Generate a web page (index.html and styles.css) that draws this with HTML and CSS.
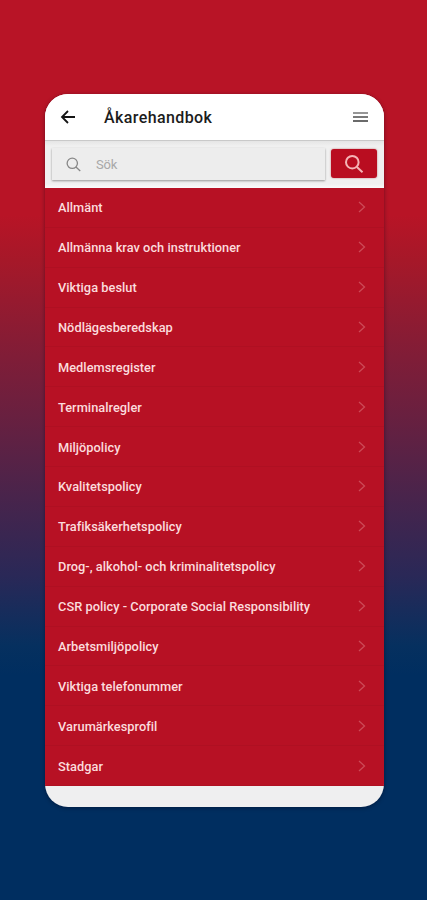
FILE: index.html
```html
<!DOCTYPE html>
<html lang="sv">
<head>
<meta charset="utf-8">
<title>Åkarehandbok</title>
<link rel="stylesheet" href="styles.css">
</head>
<body>
<main class="phone">
  <header class="topbar">
    <svg class="back" viewBox="0 0 16 16"><path d="M15 8H2M8 2L2 8l6 6"/></svg>
    <h1 class="title">Åkarehandbok</h1>
    <svg class="menu" viewBox="0 0 15 10"><path d="M0 1h15" opacity=".7"/><path d="M0 5h15" opacity=".9"/><path d="M0 9h15"/></svg>
  </header>
  <div class="searchbar">
    <div class="field">
      <svg class="glass" viewBox="0 0 16 16"><circle cx="6.7" cy="6.7" r="5.5"/><path d="M10.6 10.6l4.6 4.4"/></svg>
      <span class="placeholder">Sök</span>
    </div>
    <button class="go" aria-label="Sök"><svg class="go-icon" viewBox="0 0 20 20"><circle cx="8.3" cy="8.2" r="6.3"/><path d="M12.9 12.9l5.6 5.3"/></svg></button>
  </div>
  <ul class="list">
    <li class="row"><span class="label">Allmänt</span><svg class="chev" viewBox="0 0 8 12"><path d="M1 1l5.5 5L1 11"/></svg></li>
    <li class="row"><span class="label">Allmänna krav och instruktioner</span><svg class="chev" viewBox="0 0 8 12"><path d="M1 1l5.5 5L1 11"/></svg></li>
    <li class="row"><span class="label">Viktiga beslut</span><svg class="chev" viewBox="0 0 8 12"><path d="M1 1l5.5 5L1 11"/></svg></li>
    <li class="row"><span class="label">Nödlägesberedskap</span><svg class="chev" viewBox="0 0 8 12"><path d="M1 1l5.5 5L1 11"/></svg></li>
    <li class="row"><span class="label">Medlemsregister</span><svg class="chev" viewBox="0 0 8 12"><path d="M1 1l5.5 5L1 11"/></svg></li>
    <li class="row"><span class="label">Terminalregler</span><svg class="chev" viewBox="0 0 8 12"><path d="M1 1l5.5 5L1 11"/></svg></li>
    <li class="row"><span class="label">Miljöpolicy</span><svg class="chev" viewBox="0 0 8 12"><path d="M1 1l5.5 5L1 11"/></svg></li>
    <li class="row"><span class="label">Kvalitetspolicy</span><svg class="chev" viewBox="0 0 8 12"><path d="M1 1l5.5 5L1 11"/></svg></li>
    <li class="row"><span class="label">Trafiksäkerhetspolicy</span><svg class="chev" viewBox="0 0 8 12"><path d="M1 1l5.5 5L1 11"/></svg></li>
    <li class="row"><span class="label">Drog-, alkohol- och kriminalitetspolicy</span><svg class="chev" viewBox="0 0 8 12"><path d="M1 1l5.5 5L1 11"/></svg></li>
    <li class="row"><span class="label">CSR policy - Corporate Social Responsibility</span><svg class="chev" viewBox="0 0 8 12"><path d="M1 1l5.5 5L1 11"/></svg></li>
    <li class="row"><span class="label">Arbetsmiljöpolicy</span><svg class="chev" viewBox="0 0 8 12"><path d="M1 1l5.5 5L1 11"/></svg></li>
    <li class="row"><span class="label">Viktiga telefonummer</span><svg class="chev" viewBox="0 0 8 12"><path d="M1 1l5.5 5L1 11"/></svg></li>
    <li class="row"><span class="label">Varumärkesprofil</span><svg class="chev" viewBox="0 0 8 12"><path d="M1 1l5.5 5L1 11"/></svg></li>
    <li class="row"><span class="label">Stadgar</span><svg class="chev" viewBox="0 0 8 12"><path d="M1 1l5.5 5L1 11"/></svg></li>
  </ul>
</main>
</body>
</html>
```
FILE: styles.css
```css
* { box-sizing: border-box; }
body {
  margin: 0;
  height: 900px;
  padding: 94px 43px 93px 45px;
  overflow: hidden;
  font-family: Roboto, "Liberation Sans", sans-serif;
  background: linear-gradient(#b81426 0, #b81426 215px, #a61829 260px, #2a2857 575px, #06305f 645px, #002e60 675px);
}
.phone {
  height: 713px;
  border-radius: 23px;
  overflow: hidden;
  background: #efeff0;
  box-shadow: 0 1px 4px rgba(0, 0, 20, .4);
}
svg { display: block; fill: none; flex: none; }
.topbar {
  height: 46px;
  display: flex;
  align-items: center;
  padding: 0 16px 0 15px;
  background: #fff;
}
.back { width: 16px; height: 16px; stroke: #151515; stroke-width: 1.8; }
.title {
  flex: 1;
  margin: 1px 0 0 28px;
  font-size: 16px;
  font-weight: 500;
  line-height: 20px;
  letter-spacing: .4px;
  color: #1c1c1c;
}
.menu { width: 15px; height: 10px; stroke: #6a6a6a; stroke-width: 2; }
.searchbar {
  height: 48px;
  display: flex;
  align-items: flex-start;
  justify-content: space-between;
  padding: 8px 7px 0;
  border-top: 1px solid #c9c9c9;
  background: linear-gradient(#e5e5e5, #f0f0f0 5px, #f0f0f0 43px, #fafafa);
}
.field {
  width: 273px;
  height: 32px;
  display: flex;
  align-items: center;
  padding-left: 14px;
  margin-top: -1px;
  background: #ededed;
  box-shadow: 0 1px 2px rgba(0, 0, 0, .38);
}
.glass { width: 15px; height: 15px; stroke: #888; stroke-width: 1.4; }
.placeholder { margin-left: 15px; font-size: 13px; letter-spacing: -.15px; color: #a8a8a8; }
.go {
  width: 46px;
  height: 29px;
  display: flex;
  align-items: center;
  justify-content: center;
  padding: 0;
  border: 0;
  border-radius: 3px;
  background: #b90d20;
  box-shadow: 0 0 2px rgba(150, 0, 10, .55);
}
.go-icon { width: 20px; height: 20px; stroke: #f5b5b6; stroke-width: 2; }
.list {
  height: 598px;
  margin: 0;
  padding: 0;
  list-style: none;
  display: grid;
  grid-template-rows: repeat(15, 1fr);
  background: #b71124;
}
.row {
  display: flex;
  align-items: center;
  justify-content: space-between;
  padding: 0 18px 0 13px;
  border-bottom: 1px solid #af1022;
}
.label {
  padding-top: 2px;
  font-size: 12.8px;
  font-weight: 500;
  line-height: 16px;
  letter-spacing: .03px;
  color: #fbdcdd;
  white-space: nowrap;
}
.chev { width: 8px; height: 12px; stroke: #cc4a57; stroke-width: 1.3; }
```
